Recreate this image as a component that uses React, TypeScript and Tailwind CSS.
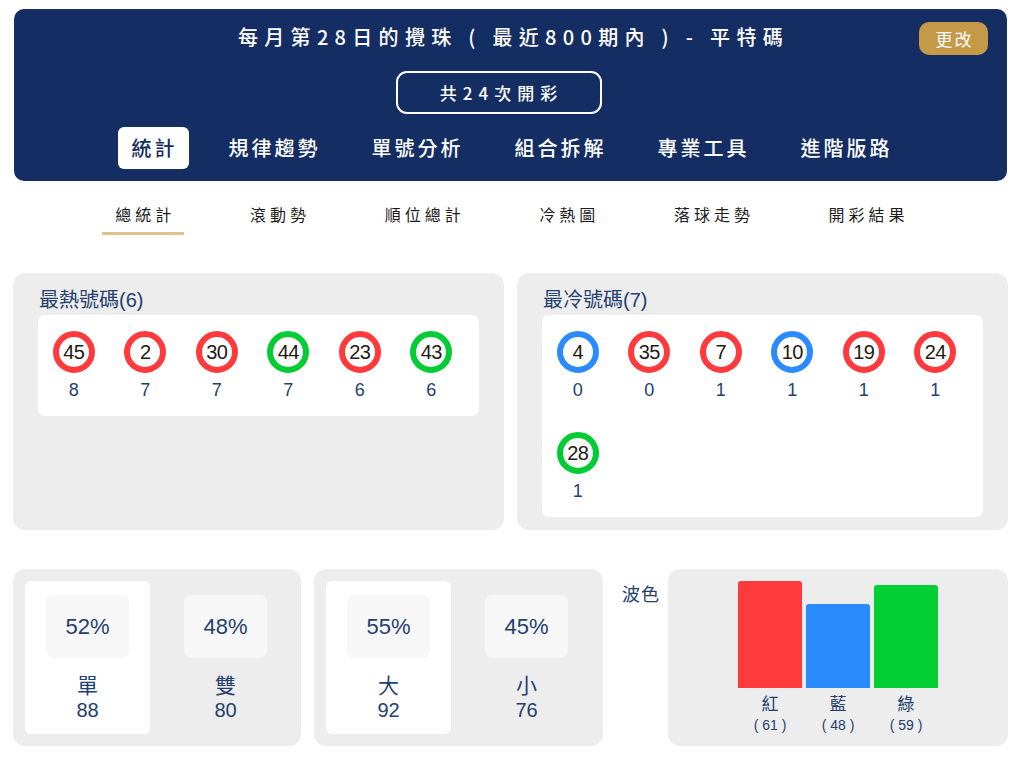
import React from "react";

const NAVY = "text-[#23406f]";

type Ball = { n: number; c: "r" | "g" | "b"; cnt: number };

const hot: Ball[] = [
  { n: 45, c: "r", cnt: 8 },
  { n: 2, c: "r", cnt: 7 },
  { n: 30, c: "r", cnt: 7 },
  { n: 44, c: "g", cnt: 7 },
  { n: 23, c: "r", cnt: 6 },
  { n: 43, c: "g", cnt: 6 },
];
const cold: Ball[] = [
  { n: 4, c: "b", cnt: 0 },
  { n: 35, c: "r", cnt: 0 },
  { n: 7, c: "r", cnt: 1 },
  { n: 10, c: "b", cnt: 1 },
  { n: 19, c: "r", cnt: 1 },
  { n: 24, c: "r", cnt: 1 },
  { n: 28, c: "g", cnt: 1 },
];

const ringClass = {
  r: "border-[#ff3a3c]",
  g: "border-[#02cc33]",
  b: "border-[#2a8bff]",
};

function BallItem({ b }: { b: Ball }) {
  return (
    <div className="w-[71.5px] h-[101px] flex flex-col items-center pt-[16px]">
      <div
        className={`w-[42px] h-[42px] rounded-full border-[6px] bg-white flex items-center justify-center ${ringClass[b.c]}`}
      >
        <span className="text-[20px] leading-[20px] text-[#1f1a14] tracking-[-0.6px]">{b.n}</span>
      </div>
      <div className={`mt-[7px] text-[18px] leading-[20px] ${NAVY}`}>{b.cnt}</div>
    </div>
  );
}

function BallPanel({ title, balls }: { title: string; balls: Ball[] }) {
  return (
    <div className="bg-[#ededed] rounded-[12px] pt-[17px] px-[25px] pb-[13px] flex flex-col items-start">
      <div className={`text-[20px] leading-[20px] ${NAVY} ml-[1px]`}>{title}</div>
      <div className="mt-[5px] w-full bg-white rounded-[7px] flex flex-wrap">
        {balls.map((b) => (
          <BallItem key={b.n} b={b} />
        ))}
      </div>
    </div>
  );
}

function StatCol({ pct, label, cnt, active }: { pct: string; label: string; cnt: number; active?: boolean }) {
  return (
    <div
      className={`w-[125px] h-[153px] rounded-[6px] flex flex-col items-center pt-[14px] ${active ? "bg-white" : ""}`}
    >
      <div className={`w-[83px] h-[63px] rounded-[7px] bg-[#f7f7f7] flex items-center justify-center text-[22px] ${NAVY}`}>
        {pct}
      </div>
      <div className={`mt-[17px] text-[21px] leading-[22px] ${NAVY}`}>{label}</div>
      <div className={`mt-[2px] text-[20px] leading-[22px] ${NAVY}`}>{cnt}</div>
    </div>
  );
}

function StatPanel({ a, b }: { a: [string, string, number]; b: [string, string, number] }) {
  return (
    <div className="bg-[#ededed] rounded-[12px] p-[12px] flex gap-[13px]">
      <StatCol pct={a[0]} label={a[1]} cnt={a[2]} active />
      <StatCol pct={b[0]} label={b[1]} cnt={b[2]} />
    </div>
  );
}

const waves = [
  { label: "紅", v: 61, cls: "bg-[#ff3a3c]" },
  { label: "藍", v: 48, cls: "bg-[#2a8bff]" },
  { label: "綠", v: 59, cls: "bg-[#02cf34]" },
];

export default function App() {
  const tabs = ["統計", "規律趨勢", "單號分析", "組合拆解", "專業工具", "進階版路"];
  const subs = ["總統計", "滾動勢", "順位總計", "冷熱圖", "落球走勢", "開彩結果"];
  return (
    <div
      className="w-[1024px] h-[762px] bg-white overflow-hidden"
      style={{ fontFamily: '"Liberation Sans", "Noto Sans CJK TC", sans-serif' }}
    >
      {/* Header */}
      <div className="pt-[9px] pl-[14px]">
        <div
          className="relative w-[993px] h-[172px] bg-[#142d62] rounded-[10px] flex flex-col items-center text-white"
          style={{ fontFamily: '"Noto Sans CJK TC", sans-serif' }}
        >
          <div className="mt-[17px] h-[22px] leading-[22px] text-[20px] font-medium tracking-[6.3px] pl-[6px] whitespace-nowrap">
            每月第28日的攪珠 ( 最近800期內 ) - 平特碼
          </div>
          <div className="absolute right-[19px] top-[13px] w-[69px] h-[33px] rounded-[10px] bg-[#c49a48] flex items-center justify-center text-[17px] tracking-[2px] pl-[2px]">
            更改
          </div>
          <div className="mt-[23px] mr-[24px] w-[206px] h-[43px] border-2 border-white rounded-[11px] flex items-center justify-center text-[17px] font-medium tracking-[6px] pl-[6px] whitespace-nowrap">
            共24次開彩
          </div>
          <div className="mt-[13px] flex gap-[26px]">
            {tabs.map((t, i) => (
              <div
                key={t}
                className={`h-[42px] px-[14px] flex items-center rounded-[6px] text-[20px] font-medium tracking-[3px] whitespace-nowrap ${
                  i === 0 ? "bg-white text-[#142d62]" : ""
                }`}
              >
                <span className="mr-[-3px]">{t}</span>
              </div>
            ))}
          </div>
        </div>
      </div>

      {/* Sub tabs */}
      <div
        className="mt-[21px] ml-[76px] w-[868px] flex justify-around text-[#1c1c1c]"
        style={{ fontFamily: '"Noto Sans CJK TC", sans-serif' }}
      >
        {subs.map((s, i) => (
          <div
            key={s}
            className={`shrink-0 whitespace-nowrap px-[13px] pb-[6px] text-[16px] leading-[24px] tracking-[4px] border-b-[3px] ${
              i === 0 ? "border-[#dec38c]" : "border-transparent"
            }`}
          >
            <span className="mr-[-4px]">{s}</span>
          </div>
        ))}
      </div>

      {/* Hot / cold */}
      <div className="mt-[38px] ml-[13px] w-[995px] grid grid-cols-2 gap-[13px]">
        <BallPanel title="最熱號碼(6)" balls={hot} />
        <BallPanel title="最冷號碼(7)" balls={cold} />
      </div>

      {/* Bottom stats */}
      <div className="mt-[39px] ml-[13px] flex h-[177px]">
        <div className="w-[288px]">
          <StatPanel a={["52%", "單", 88]} b={["48%", "雙", 80]} />
        </div>
        <div className="ml-[13px] w-[289px]">
          <StatPanel a={["55%", "大", 92]} b={["45%", "小", 76]} />
        </div>
        <div className="w-[65px] pl-[19px] pt-[16px]">
          <div className={`text-[18px] leading-[20px] tracking-[1px] ${NAVY}`}>波色</div>
        </div>
        <div className="w-[340px] bg-[#ededed] rounded-[12px] pt-[12px] flex justify-center gap-[4px]">
          {waves.map((w) => (
            <div key={w.label} className="w-[64px] flex flex-col items-center">
              <div className="h-[107px] w-full flex items-end">
                <div
                  className={`w-full rounded-t-[3px] ${w.cls}`}
                  style={{ height: `${Math.round((w.v / 61) * 107)}px` }}
                />
              </div>
              <div className={`mt-[8px] text-[17px] leading-[18px] ${NAVY}`}>{w.label}</div>
              <div className={`mt-[2px] text-[14px] leading-[18px] ${NAVY}`}>( {w.v} )</div>
            </div>
          ))}
        </div>
      </div>
    </div>
  );
}
